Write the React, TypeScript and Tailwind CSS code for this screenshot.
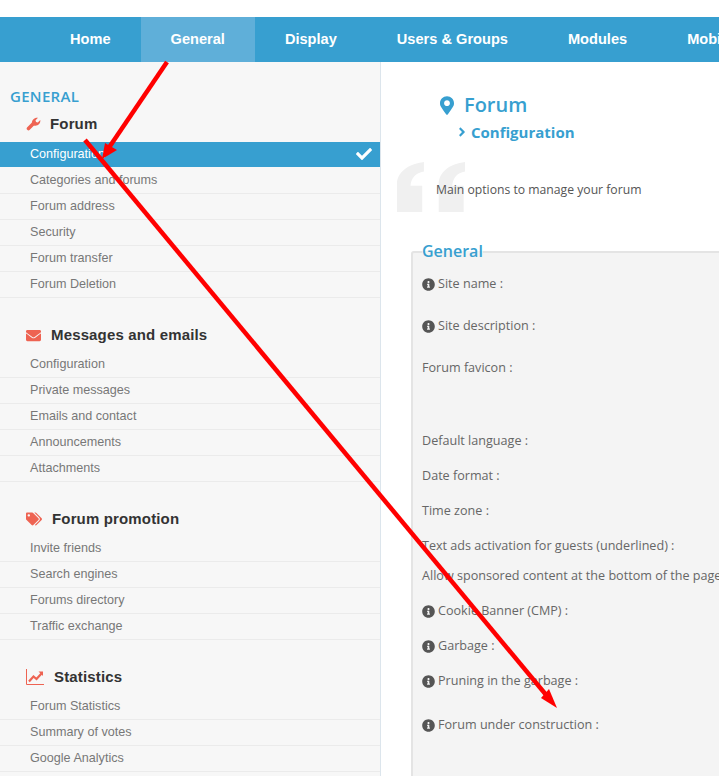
import { FaEnvelope, FaTags, FaInfoCircle, FaCheck, FaMapMarkerAlt, FaAngleRight } from "react-icons/fa";
import type { ReactNode } from "react";

const navItems = ["Home", "General", "Display", "Users & Groups", "Modules", "Mobile"];

function WrenchIcon() {
  return (
    <svg className="h-[14px] w-[15px]" viewBox="0 0 15 14" fill="currentColor">
      <path d="M2.5 11.5L8 6" stroke="currentColor" strokeWidth="3.6" strokeLinecap="round" />
      <path d="M6 6.5C5.5 3 8.5 .3 12 .8L9.5 3.3L10 5L11.8 5.5L14.3 3C14.8 6.5 11.5 9.5 8 8.5Z" />
    </svg>
  );
}

function ChartIcon() {
  return (
    <svg className="h-[16px] w-[18px]" viewBox="0 0 18 16" fill="none" stroke="currentColor">
      <path d="M.5 0V15.5H18" strokeWidth="1" />
      <path d="M3 12.5L7.5 7.5L10.5 10L15.5 4.5" strokeWidth="2.2" />
      <path d="M12.5 2.5H17V7Z" fill="currentColor" stroke="none" />
    </svg>
  );
}

const sections: { title: string; icon: ReactNode; gap: string; links: string[] }[] = [
  {
    title: "Forum",
    icon: <WrenchIcon />,
    gap: "gap-[9px]",
    links: ["Configuration", "Categories and forums", "Forum address", "Security", "Forum transfer", "Forum Deletion"],
  },
  {
    title: "Messages and emails",
    icon: <FaEnvelope className="h-[15px] w-[15px]" />,
    gap: "gap-[10px]",
    links: ["Configuration", "Private messages", "Emails and contact", "Announcements", "Attachments"],
  },
  {
    title: "Forum promotion",
    icon: <FaTags className="h-[16px] w-[16px]" />,
    gap: "gap-[10px]",
    links: ["Invite friends", "Search engines", "Forums directory", "Traffic exchange"],
  },
  {
    title: "Statistics",
    icon: <ChartIcon />,
    gap: "gap-[10px]",
    links: ["Forum Statistics", "Summary of votes", "Google Analytics"],
  },
];

const fields: { label: string; info: boolean; height: string }[] = [
  { label: "Site name :", info: true, height: "h-[42px]" },
  { label: "Site description :", info: true, height: "h-[42px]" },
  { label: "Forum favicon :", info: false, height: "h-[73px]" },
  { label: "Default language :", info: false, height: "h-[35px]" },
  { label: "Date format :", info: false, height: "h-[35px]" },
  { label: "Time zone :", info: false, height: "h-[35px]" },
  { label: "Text ads activation for guests (underlined) :", info: false, height: "h-[30px]" },
  { label: "Allow sponsored content at the bottom of the page :", info: false, height: "h-[35px]" },
  { label: "Cookie Banner (CMP) :", info: true, height: "h-[35px]" },
  { label: "Garbage :", info: true, height: "h-[35px]" },
  { label: "Pruning in the garbage :", info: true, height: "h-[44px]" },
  { label: "Forum under construction :", info: true, height: "h-[42px]" },
];

function Sidebar() {
  return (
    <aside className="w-[381px] shrink-0 border-r border-[#dce5ec] bg-[#f7f7f7] font-['Liberation_Sans',sans-serif]">
      <div className="pt-[25px] pb-[3px] pl-[10px] font-['Open_Sans',sans-serif] text-[15px] leading-[18px] font-semibold tracking-[0.3px] text-[#379fd0]">
        GENERAL
      </div>
      {sections.map((section, i) => (
        <section key={section.title} className={i === 0 ? "" : "mt-[20px]"}>
          <h3
            className={`flex h-[34px] items-center pl-[26px] ${i === 0 ? "pb-[2px]" : ""} ${section.gap} text-[15px] font-bold tracking-[0.15px] text-[#333]`}
          >
            <span className="text-[#ee6352]">{section.icon}</span>
            {section.title}
          </h3>
          <ul>
            {section.links.map((link, j) => {
              const active = i === 0 && j === 0;
              return (
                <li
                  key={link}
                  className={
                    active
                      ? "mb-[1px] flex h-[25px] items-center justify-between bg-[#379fd0] pr-[8px] pb-[1px] pl-[30px] text-[12.6px] text-white"
                      : "flex h-[26px] items-center border-b border-[#ebebeb] pb-[1px] pl-[30px] text-[12.6px] text-[#777]"
                  }
                >
                  {link}
                  {active && <FaCheck className="h-[16px] w-[16px]" />}
                </li>
              );
            })}
          </ul>
        </section>
      ))}
    </aside>
  );
}

function Main() {
  return (
    <main className="relative min-w-0 flex-1 font-['Open_Sans',sans-serif]">
      <div className="flex items-center gap-[10px] pt-[28px] pl-[59px] text-[20px] leading-[30px] font-semibold text-[#379fd0]">
        <FaMapMarkerAlt className="h-[19px] w-[14px]" />
        Forum
      </div>
      <div className="flex items-center gap-[3px] pt-[2px] pb-[1px] pl-[75px] text-[15px] leading-[20px] font-bold text-[#379fd0]">
        <FaAngleRight className="h-[14px] w-[12px]" />
        Configuration
      </div>
      <svg className="absolute top-[100px] left-[16px] h-[50px] w-[68px]" viewBox="0 0 202 148" fill="#f0f0f0">
        <path d="M0 148V65C0 30 35 5 80 0V28C55 32 42 48 40 70H75V148Z" />
        <path d="M124 148V65C124 30 157 5 202 0V28C178 32 166 48 164 70H198V148Z" />
      </svg>
      <p className="relative pt-[38px] pl-[55px] text-[12.2px] leading-[18px] text-[#555]">Main options to manage your forum</p>
      <fieldset className="mt-[43px] ml-[30px] w-[500px] rounded-t-[3px] border-2 border-[#e4e4e4] bg-[#f4f4f4] pb-[30px] pl-[9px]">
        <legend className="px-0 pb-[2px] text-[16px] leading-[18px] font-semibold text-[#379fd0]">General</legend>
        <div className="pt-[13px]">
          {fields.map((field) => (
            <div key={field.label} className={`${field.height} flex items-start gap-[3px] text-[12.6px] leading-[18px] whitespace-nowrap text-[#666]`}>
              {field.info && <FaInfoCircle className="mt-[3px] h-[13px] w-[13px] text-[#555]" />}
              {field.label}
            </div>
          ))}
        </div>
      </fieldset>
    </main>
  );
}

// red annotation arrows drawn on top of the screenshot
function Arrows() {
  return (
    <svg className="pointer-events-none absolute top-0 left-0 h-[776px] w-[719px]" viewBox="0 0 719 776" fill="#f00" stroke="none">
      <line x1="167" y1="62" x2="108" y2="149" stroke="#f00" strokeWidth="4.5" />
      <polygon points="102,159 105,143 117,150" />
      <line x1="85" y1="140" x2="547" y2="696" stroke="#f00" strokeWidth="4.5" />
      <polygon points="557,708 541,698 549,689" />
    </svg>
  );
}

export default function App() {
  return (
    <div className="relative h-[776px] w-[719px] overflow-hidden bg-white">
      <nav className="mt-[17px] flex h-[45px] items-center bg-[#379fd0] pl-[40px] font-['Liberation_Sans',sans-serif] text-[14.6px] font-bold whitespace-nowrap text-white">
        {navItems.map((item) => (
          <a key={item} className={`flex h-full items-center px-[30px] ${item === "General" ? "bg-[#5fafd9]" : ""}`}>
            {item}
          </a>
        ))}
      </nav>
      <div className="flex h-[714px]">
        <Sidebar />
        <Main />
      </div>
      <Arrows />
    </div>
  );
}
